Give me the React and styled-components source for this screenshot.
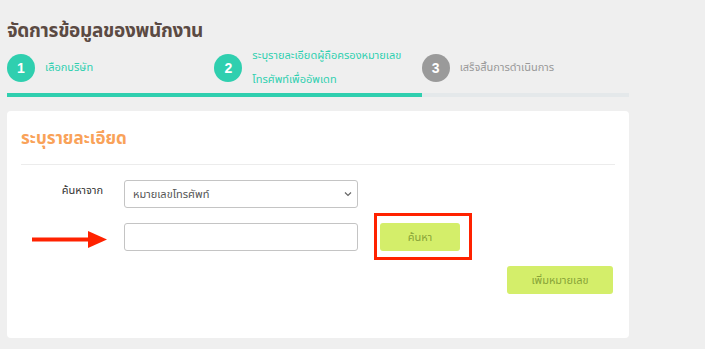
import React from 'react'
import styled, { createGlobalStyle } from 'styled-components'

const GlobalStyle = createGlobalStyle`
  html, body {
    margin: 0;
    padding: 0;
    background: #efefef;
  }
  body {
    font-family: "Noto Sans Thai", "Noto Sans", "Liberation Sans", sans-serif;
  }
`

const steps = [
  { num: 1, label: 'เลือกบริษัท', active: true },
  { num: 2, label: 'ระบุรายละเอียดผู้ถือครองหมายเลข\nโทรศัพท์เพื่ออัพเดท', active: true },
  { num: 3, label: 'เสร็จสิ้นการดำเนินการ', active: false },
]

const App = () => {
  return (
    <Page>
      <GlobalStyle />
      <Title>จัดการข้อมูลของพนักงาน</Title>
      <Steps>
        {steps.map((s) => (
          <Step key={s.num}>
            <Circle active={s.active}>{s.num}</Circle>
            <StepLabel active={s.active}>{s.label}</StepLabel>
          </Step>
        ))}
      </Steps>
      <Progress>
        <ProgressFill />
      </Progress>
      <Card>
        <CardTitle>ระบุรายละเอียด</CardTitle>
        <Divider />
        <FormRow>
          <Label>ค้นหาจาก</Label>
          <SelectWrap>
            <Select defaultValue='phone'>
              <option value='phone'>หมายเลขโทรศัพท์</option>
            </Select>
            <Chevron width='8' height='6' viewBox='0 0 8 6'>
              <path d='M1 1.5 L4 4.5 L7 1.5' fill='none' stroke='#666' strokeWidth='1.2' />
            </Chevron>
          </SelectWrap>
        </FormRow>
        <FormRow>
          <Label>
            <Arrow width='75' height='20' viewBox='0 0 75 20'>
              <rect x='0' y='7.5' width='58' height='4' fill='#ff2200' />
              <polygon points='56,1 75,9.5 56,18' fill='#ff2200' />
            </Arrow>
          </Label>
          <Input />
          <Highlight>
            <Button>ค้นหา</Button>
          </Highlight>
        </FormRow>
        <Actions>
          <AddButton>เพิ่มหมายเลข</AddButton>
        </Actions>
      </Card>
    </Page>
  )
}

export default App

const Page = styled.div`
  width: 622px;
  padding: 20px 0 13px 7px;
`
const Title = styled.h1`
  margin: 0;
  font-size: 19px;
  line-height: 24px;
  font-weight: 700;
  letter-spacing: -0.3px;
  color: #5b4a43;
`
const Steps = styled.div`
  display: grid;
  grid-template-columns: repeat(3, 1fr);
  margin: 0 0 1px;
`
const Step = styled.div`
  display: flex;
  align-items: center;
  gap: 10px;
`
const Circle = styled.div`
  flex: none;
  width: 28px;
  height: 28px;
  border-radius: 50%;
  background: ${(p) => (p.active ? '#2fcfaf' : '#9a9a9a')};
  color: #fff;
  font-family: "Liberation Sans", sans-serif;
  font-weight: 700;
  font-size: 14px;
  display: flex;
  align-items: center;
  justify-content: center;
`
const StepLabel = styled.div`
  white-space: pre-line;
  font-size: 11px;
  line-height: 24px;
  color: ${(p) => (p.active ? '#2fcfaf' : '#999')};
`
const Progress = styled.div`
  height: 4px;
  background: #e4e8ea;
`
const ProgressFill = styled.div`
  width: 415px;
  height: 100%;
  background: #2fcfaf;
`
const Card = styled.div`
  margin-top: 14px;
  background: #fff;
  border-radius: 4px;
  padding: 16px 14px 44px;
  display: flex;
  flex-direction: column;
`
const CardTitle = styled.h2`
  margin: 0;
  font-size: 17px;
  line-height: 24px;
  font-weight: 700;
  color: #f9a259;
`
const Divider = styled.div`
  height: 1px;
  background: #ececec;
  margin: 13px 0 15px;
`
const FormRow = styled.div`
  display: flex;
  align-items: center;
  margin-bottom: 15px;
`
const Label = styled.div`
  width: 82px;
  flex: none;
  margin-right: 21px;
  font-size: 11px;
  color: #333;
  display: flex;
  justify-content: flex-end;
  align-self: flex-start;
  margin-top: 2px;
`
const SelectWrap = styled.div`
  position: relative;
  width: 234px;
  height: 28px;
`
const Select = styled.select`
  appearance: none;
  width: 100%;
  height: 100%;
  box-sizing: border-box;
  border: 1px solid #c4c4c4;
  border-radius: 3px;
  background: #fff;
  padding: 0 8px;
  font-family: inherit;
  font-size: 11px;
  color: #555;
`
const Chevron = styled.svg`
  position: absolute;
  right: 6px;
  top: 11px;
  pointer-events: none;
`
const Arrow = styled.svg`
  display: block;
  margin-top: 5px;
  margin-right: -4px;
`
const Input = styled.input`
  width: 234px;
  height: 28px;
  box-sizing: border-box;
  border: 1px solid #c4c4c4;
  border-radius: 3px;
  background: #fff;
`
const Highlight = styled.div`
  margin: -10px 0 -9px 16px;
  padding: 7px 9px 6px 3px;
  border: 3px solid #ff2200;
  display: flex;
`
const Button = styled.button`
  width: 80px;
  height: 28px;
  border: none;
  border-radius: 3px;
  background: #d4ee6a;
  color: #88a438;
  font-family: inherit;
  font-size: 11px;
  padding: 0;
`
const Actions = styled.div`
  display: flex;
  justify-content: flex-end;
`
const AddButton = styled(Button)`
  width: 106px;
  margin-right: 2px;
`
